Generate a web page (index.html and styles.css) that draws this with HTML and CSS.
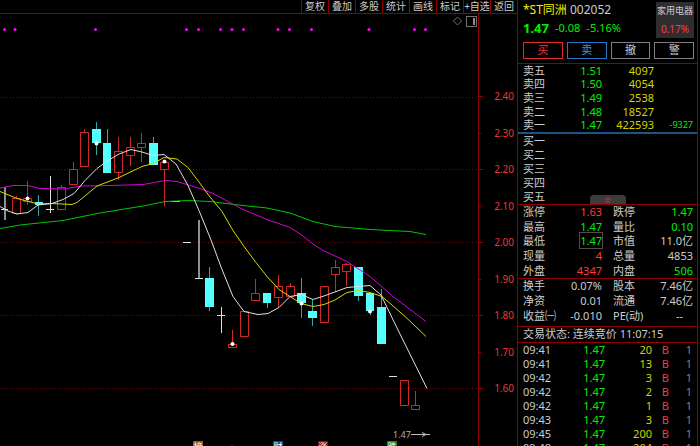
FILE: index.html
```html
<!DOCTYPE html>
<html lang="zh-CN">
<head>
<meta charset="utf-8">
<title>*ST同洲 002052</title>
<link rel="stylesheet" href="styles.css">
</head>
<body>
<main class="app">
  <section class="chart-pane">
    <nav class="toolbar">
      <button>复权</button><button>叠加</button><button>多股</button><button>统计</button><button>画线</button><button>标记</button><button>+自选</button><button>返回</button>
    </nav>
    <svg class="chart" viewBox="0 14 517 432" preserveAspectRatio="xMinYMin meet" role="img" aria-label="K线图">
      <g class="grid">
        <path d="M1 97H478M1 169.500H478M1 242.500H478M1 315.500H478M1 388.500H478"/>
      </g>
      <g class="axis">
        <path d="M478.500 14V446M479 96.500H483M479 133.500H481M479 169.500H483M479 206.500H481M479 242.500H483M479 279.500H481M479 315.500H483M479 352.500H481M479 388.500H483"/>
        <text x="514" y="100">2.40</text>
        <text x="514" y="137">2.30</text>
        <text x="514" y="173">2.20</text>
        <text x="514" y="210">2.10</text>
        <text x="514" y="246">2.00</text>
        <text x="514" y="283">1.90</text>
        <text x="514" y="319">1.80</text>
        <text x="514" y="356">1.70</text>
        <text x="514" y="392">1.60</text>
      </g>
      <g class="marks">
        <circle cx="4.500" cy="29.500" r="1.500"/><circle cx="15" cy="29.500" r="1.500"/><circle cx="95.500" cy="29.500" r="1.500"/><circle cx="186.500" cy="29.500" r="1.500"/><circle cx="198.500" cy="29.500" r="1.500"/><circle cx="220.500" cy="29.500" r="1.500"/><circle cx="232" cy="29.500" r="1.500"/><circle cx="243.500" cy="29.500" r="1.500"/><circle cx="278" cy="29.500" r="1.500"/><circle cx="289.500" cy="29.500" r="1.500"/><circle cx="311.500" cy="29.500" r="1.500"/><circle cx="369" cy="29.500" r="1.500"/><circle cx="414.500" cy="29.500" r="1.500"/><circle cx="425.500" cy="29.500" r="1.500"/>
      </g>
      <g class="tools">
        <path d="M457.500 17L461.500 21L457.500 25L453.500 21Z"/>
        <rect x="466.500" y="16.500" width="10" height="10"/>
        <path class="tools-bar" d="M474 18V25"/>
      </g>
      <g class="up">
        <path d="M16.500 196v2M12.500 198.500h8v15h-8z"/>
        <path d="M27.500 181v17M27.500 202v3M23.500 198.500h8v3h-8z"/>
        <path d="M61.500 185v2M57.500 187.500h8v22h-8z"/>
        <path d="M73.500 162v7M69.500 169.500h8v15h-8z"/>
        <path d="M84.500 129v3M80.500 132.500h8v34h-8z"/>
        <path d="M118.500 137v14M118.500 173v7M114.500 151.500h8v21h-8z"/>
        <path d="M130.500 137v10M130.500 156v10M126.500 147.500h8v8h-8z"/>
        <path d="M141.500 133v10M141.500 148v14M137.500 143.500h8v4h-8z"/>
        <path d="M164.500 170v36M160.500 162.500h8v7h-8z"/>
        <path d="M232.500 330v14M228.500 344.500h8v3h-8z"/>
        <path d="M240.500 311.500h8v25h-8z"/>
        <path d="M255.500 279v14M251.500 293.500h8v7h-8z"/>
        <path d="M278.500 275v11M278.500 298v10M274.500 286.500h8v11h-8z"/>
        <path d="M290.500 283v3M286.500 286.500h8v10h-8z"/>
        <path d="M320.500 286.500h8v36h-8z"/>
        <path d="M335.500 260v7M335.500 275v17M331.500 267.500h8v7h-8z"/>
        <path d="M346.500 263v1M346.500 272v14M342.500 264.500h8v7h-8z"/>
        <path d="M400.500 380.500h8v25h-8z"/>
        <path d="M415.500 391v14M411.500 405.500h8v4h-8z"/>
      </g>
      <g class="down">
        <path d="M38.500 195v21M96.500 122v33M107.500 129v16M153.500 137v8M209.500 267v44M267.500 300v8M301.500 278v40M312.500 300v26M358.500 290v11M370.500 300v15M381.500 289v20"/>
        <rect x="35" y="202" width="8" height="3"/>
        <rect x="92" y="129" width="9" height="14"/>
        <rect x="103" y="143" width="8" height="30"/>
        <rect x="149" y="143" width="9" height="22"/>
        <rect x="205" y="278" width="9" height="29"/>
        <rect x="263" y="293" width="8" height="10"/>
        <rect x="297" y="293" width="9" height="10"/>
        <rect x="308" y="311" width="9" height="7"/>
        <rect x="354" y="267" width="9" height="29"/>
        <rect x="366" y="293" width="8" height="18"/>
        <rect x="377" y="307" width="9" height="37"/>
      </g>
      <g class="flat">
        <path class="flat-dim" d="M5 187v33M199 220v58"/>
        <path d="M1 209.500h7M50.500 176v37M46 209.500h8M171 201.500h9M183 242.500h8M195 278.500h8M221.500 307v26M217 315.500h8M389 376.500h8"/>
      </g>
      <polyline class="ma ma-green" points="0,228.500 20,225 63,220.500 97,213.500 143,206 165,201.500 188,200.500 210,201.500 243,205.500 267,208 290,213 313,221.500 335,226.500 370,229.500 410,231.500 426,234.500"/>
      <polyline class="ma ma-magenta" points="0,188 13,185.500 28,185.500 39,188.500 63,189 82,186 110,185.500 143,184.500 165,180.500 177,181.500 200,188.500 213,193.500 243,209.500 267,219.500 290,227.500 301,234.500 313,244 323,250.500 347,261.500 370,276.500 393,296.500 426,321.500"/>
      <polyline class="ma ma-yellow" points="0,191.500 17,198.500 38,204 52,203.500 72,204.500 77,202.500 97,186 118,178 142,166.500 153,163.500 164,157.500 177,159 188,167.500 199,182 210,197 222,211.500 233,230.500 244,246.500 256,262.500 267,276.500 279,289.500 290,296.500 301,303.500 313,306.500 324,304.500 335,300 347,292.500 358,290.500 370,292.500 382,296.500 404,315.500 426,336.500"/>
      <polyline class="ma ma-white" points="0,206.500 8,211 17,214 28,212.500 38,205 52,203.500 63,199.500 74,193.500 85,180.500 97,168.500 108,160.500 119,154 131,149.500 142,152 153,155.500 164,154.500 176,164 188,185.500 199,210.500 211,240 222,269.500 233,296.500 244,311.500 258,314.500 268,313.500 279,307.500 290,296.500 301,294.500 313,299.500 324,296 347,287.500 370,285.500 381,295 398,330 427,388.500"/>
      <g class="dots">
        <circle cx="27.500" cy="198.500" r="2"/><circle cx="96.500" cy="143.500" r="2"/><circle cx="164.500" cy="161.500" r="2"/><circle cx="232.500" cy="344" r="2"/><circle cx="301.500" cy="303.500" r="2"/><circle cx="370" cy="311.500" r="2"/>
      </g>
      <g class="low">
        <text x="393" y="438">1.47</text>
        <path d="M411 434.500H430M422 432.500L426 434.500L422 436.500"/>
      </g>
      <g class="badges">
        <rect x="193" y="441" width="10" height="10" fill="#a0561c"/><text x="198" y="450">榜</text>
        <rect x="273" y="441" width="10" height="10" fill="#1c4a94"/><text x="278" y="450">财</text>
        <rect x="318" y="441" width="10" height="10" fill="#8c0a0a"/><text x="323" y="450">涨</text>
        <rect x="387" y="441" width="10" height="10" fill="#12861a"/><text x="392" y="450">跌</text>
        <circle cx="232" cy="446" r="1" fill="#c00"/>
      </g>
    </svg>
  </section>

  <aside class="quote">
    <header class="head">
      <div class="title-row">
        <div class="title">
          <h1><span class="y">*ST同洲</span> 002052</h1>
          <p class="g"><strong>1.47</strong><span>-0.08</span><span>-5.16%</span></p>
        </div>
        <a class="sector" href="#"><span>家用电器</span><span class="r">0.17%</span></a>
      </div>
      <div class="actions">
        <button class="buy">买</button><button class="sell">卖</button><button>撤</button><button>警</button>
      </div>
    </header>

    <table class="book asks">
      <tr><th>卖五</th><td class="g">1.51</td><td class="y">4097</td><td></td></tr>
      <tr><th>卖四</th><td class="g">1.50</td><td class="y">4054</td><td></td></tr>
      <tr><th>卖三</th><td class="g">1.49</td><td class="y">2538</td><td></td></tr>
      <tr><th>卖二</th><td class="g">1.48</td><td class="y">18527</td><td></td></tr>
      <tr><th>卖一</th><td class="g">1.47</td><td class="y">422593</td><td class="g small">-9327</td></tr>
    </table>
    <div class="bids-wrap">
      <table class="book bids">
        <tr><th>买一</th><td></td><td></td><td></td></tr>
        <tr><th>买二</th><td></td><td></td><td></td></tr>
        <tr><th>买三</th><td></td><td></td><td></td></tr>
        <tr><th>买四</th><td></td><td></td><td></td></tr>
        <tr><th>买五</th><td></td><td></td><td></td></tr>
      </table>
      <button class="fold" aria-label="收起"><svg width="8" height="6" viewBox="0 0 8 6"><path d="M1 3L4 1L7 3M2 5.500L4 4L6 5.500"/></svg></button>
    </div>

    <table class="stats limits">
      <tr><th>涨停</th><td class="r">1.63</td><th>跌停</th><td class="g">1.47</td></tr>
      <tr><th>最高</th><td class="g">1.47</td><th>量比</th><td class="g">0.10</td></tr>
      <tr><th>最低</th><td class="g"><span class="boxed">1.47</span></td><th>市值</th><td>11.0亿</td></tr>
      <tr><th>现量</th><td class="r">4</td><th>总量</th><td>4853</td></tr>
      <tr><th>外盘</th><td class="r">4347</td><th>内盘</th><td class="g">506</td></tr>
    </table>
    <div class="basics">
      <table class="stats">
        <tr><th>换手</th><td>0.07%</td><th>股本</th><td>7.46亿</td></tr>
        <tr><th>净资</th><td>0.01</td><th>流通</th><td>7.46亿</td></tr>
        <tr><th>收益㈠</th><td>-0.010</td><th>PE(动)</th><td class="none">--</td></tr>
      </table>
    </div>
    <p class="state">交易状态: 连续竞价 11:07:15</p>
    <table class="trades">
      <tr><td>09:41</td><td class="g">1.47</td><td class="y">20</td><td class="r">B</td><td class="dim">1</td></tr>
      <tr><td>09:41</td><td class="g">1.47</td><td class="y">13</td><td class="r">B</td><td class="dim">1</td></tr>
      <tr><td>09:42</td><td class="g">1.47</td><td class="y">3</td><td class="r">B</td><td class="dim">1</td></tr>
      <tr><td>09:42</td><td class="g">1.47</td><td class="y">2</td><td class="r">B</td><td class="dim">1</td></tr>
      <tr><td>09:42</td><td class="g">1.47</td><td class="y">1</td><td class="r">B</td><td class="dim">1</td></tr>
      <tr><td>09:43</td><td class="g">1.47</td><td class="y">3</td><td class="r">B</td><td class="dim">1</td></tr>
      <tr><td>09:45</td><td class="g">1.47</td><td class="y">200</td><td class="r">B</td><td class="dim">1</td></tr>
      <tr><td>09:48</td><td class="g">1.47</td><td class="y">204</td><td class="r">B</td><td class="dim">1</td></tr>
    </table>
  </aside>
</main>
</body>
</html>
```
FILE: styles.css
```css
* { box-sizing: border-box; margin: 0; padding: 0; }

body {
  background: #000;
  color: #cccccc;
  font: 11px/12px "Noto Sans", "Noto Sans CJK SC", sans-serif;
}

button { background: none; border: 0; color: inherit; font: inherit; cursor: pointer; }
table { width: 100%; border-collapse: collapse; table-layout: fixed; }
th { font-weight: 400; text-align: left; white-space: nowrap; }
td { text-align: right; white-space: nowrap; }

.g { color: #00f000; }
.r { color: #ff3a3a; }
.y { color: #d4d400; }
.dim { color: #808080; }

.app {
  display: grid;
  grid-template-columns: minmax(0, 1fr) 181px;
  height: 100vh;
  padding-right: 2px;
  overflow: hidden;
}

/* Chart */
.chart-pane { display: flex; flex-direction: column; min-height: 0; }

.toolbar {
  display: flex;
  justify-content: flex-end;
  height: 14px;
  flex: none;
  border-bottom: 1px solid #900000;
}
.toolbar button {
  width: 27px;
  height: 13px;
  border-left: 1px solid #900000;
  font-size: 10px;
  line-height: 12px;
  padding-bottom: 1px;
  white-space: nowrap;
  text-align: center;
}
.toolbar button:first-child { border-left-width: 1px; }

.chart { display: block; width: 100%; flex: none; }
.grid path { stroke: #800000; stroke-dasharray: 1 2; shape-rendering: crispEdges; }
.axis path { fill: none; stroke: #900000; shape-rendering: crispEdges; }
.axis text { fill: #f03434; font-size: 10px; text-anchor: end; }
.marks { fill: #ff00ff; }
.tools { fill: none; stroke: #707070; }
.tools-bar { stroke: #909090; stroke-width: 2; }
.up path { fill: none; stroke: #d42828; }
.down path { stroke: #2fa8a8; }
.down rect { fill: #54ffff; }
.flat path { stroke: #e0e0e0; }
.flat .flat-dim { stroke: #909090; stroke-width: 2; }
.ma { fill: none; stroke-linejoin: round; }
.ma-green { stroke: #00c800; }
.ma-magenta { stroke: #d800d8; }
.ma-yellow { stroke: #d8d800; }
.ma-white { stroke: #e0e0e0; }
.dots { fill: #fff; }
.low text { fill: #b0b0b0; font-size: 9px; }
.low path { fill: none; stroke: #c0c0c0; }
.badges text { fill: #fff; font-size: 9px; text-anchor: middle; }

/* Quote panel */
.quote {
  border: solid #900000;
  border-width: 0 1px;
  min-width: 0;
}

.head { padding: 2px 3px 4px 5px; border-bottom: 1px solid #900000; }
.title-row { display: flex; justify-content: space-between; height: 36px; }
.title h1 { font-size: 12px; font-weight: 400; line-height: 15px; white-space: nowrap; }
.title p { display: flex; gap: 6px; line-height: 20px; padding-top: 1px; }
.title strong { font-size: 13px; }
.title .y { color: #f0f000; }

.sector {
  display: flex;
  flex-direction: column;
  align-items: center;
  justify-content: space-around;
  width: 38px;
  background: #2e2e30;
  color: inherit;
  font-size: 9px;
  text-decoration: none;
  white-space: nowrap;
}
.sector .r { font-size: 10px; }

.actions { display: grid; grid-template-columns: repeat(4, 1fr); gap: 4px; padding-top: 4px; }
.actions button { height: 17px; border: 1px solid #808080; line-height: 13px; padding-bottom: 2px; }
.actions .buy { border-color: #e02828; color: #f03434; }
.actions .sell { border-color: #2a78c0; color: #3c94e0; }

.book th { width: 34px; padding-left: 5px; }
.book td:nth-child(2) { width: 50px; }
.book td:nth-child(3) { width: 52px; }
.book td:last-child { padding-right: 4px; }
.asks { height: 68px; }
.bids { height: 70px; }
.book .small { font-size: 9px; }

.bids-wrap {
  position: relative;
  border-top: 2px solid #1c5488;
  border-bottom: 1px solid #900000;
}
.fold {
  position: absolute;
  bottom: 0;
  left: 50%;
  width: 36px;
  height: 9px;
  margin-left: -18px;
  border-radius: 4px 4px 0 0;
  background: #3c3c3e;
  line-height: 8px;
}
.fold svg { display: block; margin: 0 auto; fill: none; stroke: #f03434; }

.stats th { width: 38px; padding-left: 5px; }
.stats th:nth-child(3) { width: 48px; padding-left: 11px; }
.stats td { width: 46px; }
.stats td:last-child { width: auto; padding-right: 4px; }
.stats td.none { padding-right: 14px; }
.limits { height: 73px; }
.boxed { outline: 1px solid #505050; }

.basics {
  padding: 0 0 3px;
  border: solid #900000;
  border-width: 1px 0;
}
.basics table { height: 44px; }

.state {
  height: 16px;
  padding-left: 5px;
  line-height: 14px;
  border-bottom: 1px solid #900000;
  white-space: nowrap;
}

.trades td { height: 14px; padding-bottom: 1px; }
.trades td:first-child { width: 36px; padding-left: 5px; text-align: left; }
.trades td:nth-child(2) { width: 51px; }
.trades td:nth-child(3) { width: 47px; }
.trades td:nth-child(4) { width: 17px; }
.trades td:last-child { padding-right: 5px; }
```
